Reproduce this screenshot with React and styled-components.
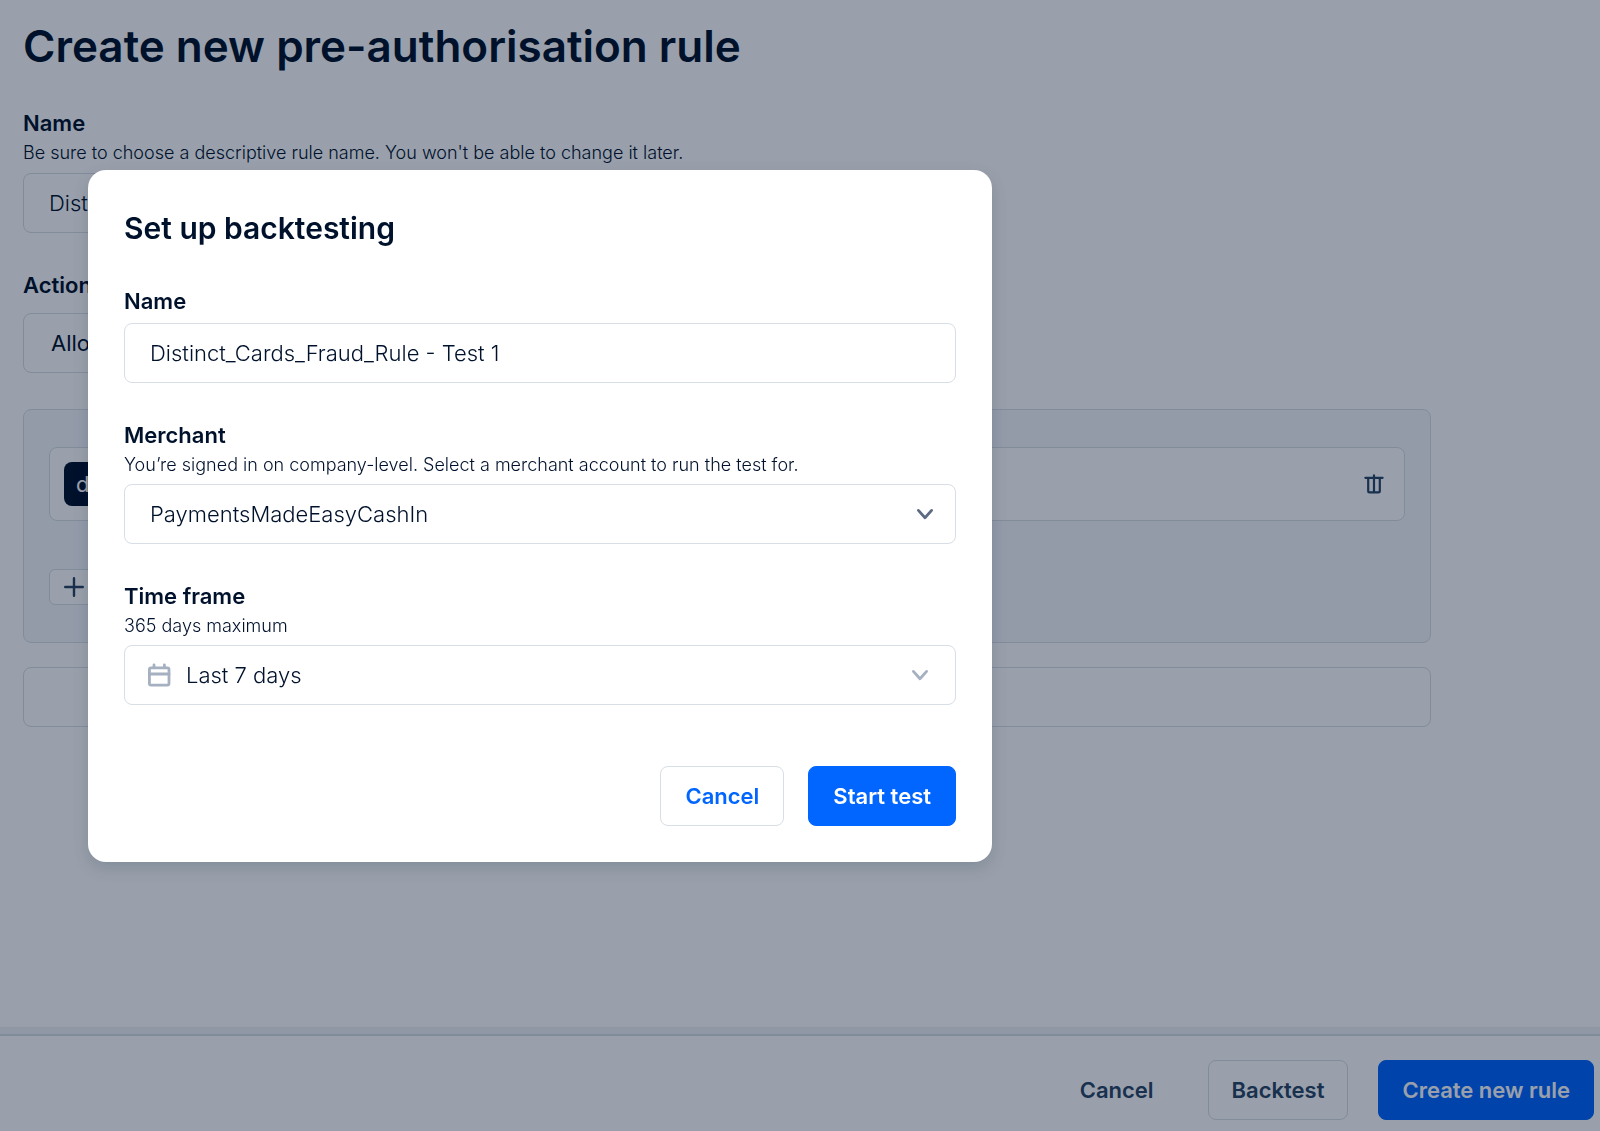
import React from "react";
import styled, { createGlobalStyle } from "styled-components";

const color = {
  ink: "#00112c",
  slate: "#2b4665",
  muted: "#5c6b82",
  faint: "#a5b0c0",
  line: "#d8dee5",
  panel: "#f5f7fb",
  blue: "#0066ff",
};

const GlobalStyle = createGlobalStyle`
  *, *::before, *::after { box-sizing: border-box; }
  body {
    margin: 0;
    background: #fff;
    color: ${color.ink};
    font-family: Inter, "Liberation Sans", sans-serif;
    font-size: 22px;
    line-height: 30px;
  }
  h1, h2, p { margin: 0; }
  button, input, select { font: inherit; color: inherit; }
`;

const Page = styled.div`
  display: flex;
  flex-direction: column;
  min-height: 100vh;
`;

const Main = styled.main`
  flex: 1;
  display: flex;
  flex-direction: column;
  padding: 18px 169px 0 23px;
`;

const PageTitle = styled.h1`
  font-size: 44px;
  line-height: 56px;
  font-weight: 600;
  margin-bottom: 34px;
`;

const Field = styled.div`
  display: flex;
  flex-direction: column;
  max-width: ${(p) => p.$max || "none"};
  margin-bottom: ${(p) => p.$after || 37}px;
`;

const Label = styled.label`
  align-self: flex-start;
  font-weight: 600;
`;

const Help = styled.p`
  font-size: 18px;
  font-weight: 300;
`;

const Control = styled.div`
  position: relative;
  margin-top: ${(p) => p.$gap || 4}px;
`;

const TextInput = styled.input`
  display: block;
  width: 100%;
  height: 60px;
  padding: 0 25px;
  border: 1px solid ${color.line};
  border-radius: 8px;
  background: #fff;
  font-weight: 300;
`;

const Select = styled.select`
  display: block;
  width: 100%;
  height: 60px;
  padding: 0 60px 0 ${(p) => p.$indent || 25}px;
  border: 1px solid ${color.line};
  border-radius: 8px;
  background: #fff;
  appearance: none;
  font-weight: ${(p) => p.$weight || 300};
`;

const Leading = styled.span`
  position: absolute;
  left: 23px;
  top: 18px;
  display: flex;
  color: ${color.faint};
  pointer-events: none;
`;

const Trailing = styled.span`
  position: absolute;
  right: ${(p) => (p.$inset ? 24 : 19)}px;
  top: 18px;
  display: flex;
  color: ${(p) => (p.$inset ? color.faint : color.muted)};
  pointer-events: none;
`;

const Panel = styled.section`
  display: flex;
  flex-direction: column;
  align-items: flex-start;
  gap: 48px;
  padding: 37px 25px;
  border: 1px solid ${color.line};
  border-radius: 8px;
  background: ${color.panel};
`;

const Condition = styled.div`
  display: flex;
  align-items: center;
  justify-content: space-between;
  align-self: stretch;
  height: 74px;
  padding: 0 18px 0 14px;
  border: 1px solid ${color.line};
  border-radius: 8px;
  background: #fff;
`;

const Chip = styled.span`
  padding: 7px 12px;
  border-radius: 8px;
  background: ${color.ink};
  color: #fff;
  font-size: 22px;
`;

const IconButton = styled.button`
  display: flex;
  padding: 0;
  border: 0;
  background: none;
  color: ${color.slate};
`;

const AddButton = styled.button`
  display: flex;
  align-items: center;
  height: 36px;
  width: 120px;
  padding: 0 12px;
  border: 1px solid ${color.line};
  border-radius: 6px;
  background: #fff;
  color: ${color.slate};
`;

const AddGroup = styled.button`
  height: 60px;
  margin-top: 24px;
  border: 1px solid ${color.line};
  border-radius: 8px;
  background: #fff;
`;

const Footer = styled.footer`
  display: flex;
  justify-content: flex-end;
  gap: 30px;
  padding: 24px 6px 11px;
  border-top: 2px solid ${color.line};
  box-shadow: 0 -7px 0 #f0f2f7;
`;

const variants = {
  primary: `border-color: ${color.blue}; background: ${color.blue}; color: #fff;`,
  outline: `border-color: ${color.line}; background: #fff; color: ${color.slate};`,
  accent: `border-color: ${color.line}; background: #fff; color: ${color.blue};`,
  ghost: `border-color: transparent; background: none; color: ${color.slate};`,
};

const Button = styled.button`
  height: 60px;
  padding: 0 ${(p) => (p.$roomy ? 24 : 23)}px;
  border: 1px solid;
  border-radius: 8px;
  font-weight: 600;
  ${(p) => variants[p.$variant]}
`;

const Scrim = styled.div`
  position: fixed;
  inset: 0;
  padding: 170px 88px;
  background: rgba(0, 17, 44, 0.4);
`;

const Dialog = styled.div`
  max-width: 904px;
  padding: 36px;
  border-radius: 18px;
  background: #fff;
  box-shadow: 0 6px 16px rgba(0, 40, 60, 0.16);
`;

const DialogTitle = styled.h2`
  font-size: 30px;
  line-height: 44px;
  font-weight: 600;
  margin-bottom: 36px;
`;

const Actions = styled.div`
  display: flex;
  justify-content: flex-end;
  gap: 24px;
`;

const Chevron = () => (
  <svg width="24" height="24" viewBox="0 0 24 24" fill="none" stroke="currentColor" strokeWidth="2.8" strokeLinecap="round" strokeLinejoin="round" aria-hidden="true">
    <path d="M5.4 8.4 12 15.8l6.6-7.4" />
  </svg>
);

const Calendar = () => (
  <svg width="24" height="24" viewBox="0 0 24 24" fill="none" stroke="currentColor" strokeWidth="2.8" strokeLinecap="round" aria-hidden="true">
    <rect x="2.4" y="4.8" width="19.6" height="17.4" rx="1.6" />
    <path d="M2.5 11h19.5M7 2v2M17.4 2v2" />
  </svg>
);

const Trash = () => (
  <svg width="24" height="24" viewBox="0 0 24 24" fill="none" stroke="currentColor" strokeWidth="2.2" strokeLinecap="round" strokeLinejoin="round" aria-hidden="true">
    <path d="M3.4 5.8h17.2M12 3.4v17M6.2 5.8v13.2q0 1.4 1.4 1.4h8.8q1.4 0 1.4-1.4V5.8" />
  </svg>
);

const Plus = () => (
  <svg width="24" height="24" viewBox="0 0 24 24" stroke="currentColor" strokeWidth="2.4" strokeLinecap="round" aria-hidden="true">
    <path d="M3.2 12h17.6M12 3.2v17.6" />
  </svg>
);

export default function App() {
  return (
    <>
      <GlobalStyle />
      <Page>
        <Main>
          <PageTitle>Create new pre-authorisation rule</PageTitle>
          <Field $max="720px">
            <Label htmlFor="rule-name">Name</Label>
            <Help>Be sure to choose a descriptive rule name. You won't be able to change it later.</Help>
            <Control $gap={5}>
              <TextInput id="rule-name" defaultValue="Distinct_Cards_Fraud_Rule" />
            </Control>
          </Field>
          <Field $max="720px" $after={36}>
            <Label htmlFor="rule-action">Action</Label>
            <Control $gap={13}>
              <Select id="rule-action" $indent={27} $weight={400}>
                <option>Allow</option>
              </Select>
            </Control>
          </Field>
          <Panel>
            <Condition>
              <Chip>distinct</Chip>
              <IconButton type="button" aria-label="Delete condition">
                <Trash />
              </IconButton>
            </Condition>
            <AddButton type="button" aria-label="Add condition">
              <Plus />
            </AddButton>
          </Panel>
          <AddGroup type="button" aria-label="Add condition group" />
        </Main>
        <Footer>
          <Button type="button" $variant="ghost">Cancel</Button>
          <Button type="button" $variant="outline">Backtest</Button>
          <Button type="button" $variant="primary">Create new rule</Button>
        </Footer>
      </Page>
      <Scrim>
        <Dialog role="dialog" aria-modal="true" aria-labelledby="dialog-title">
          <DialogTitle id="dialog-title">Set up backtesting</DialogTitle>
          <Field>
            <Label htmlFor="test-name">Name</Label>
            <Control $gap={7}>
              <TextInput id="test-name" defaultValue="Distinct_Cards_Fraud_Rule - Test 1" />
            </Control>
          </Field>
          <Field>
            <Label htmlFor="merchant">Merchant</Label>
            <Help>You’re signed in on company-level. Select a merchant account to run the test for.</Help>
            <Control>
              <Select id="merchant">
                <option>PaymentsMadeEasyCashIn</option>
              </Select>
              <Trailing>
                <Chevron />
              </Trailing>
            </Control>
          </Field>
          <Field $after={61}>
            <Label htmlFor="time-frame">Time frame</Label>
            <Help>365 days maximum</Help>
            <Control>
              <Select id="time-frame" $indent={61}>
                <option>Last 7 days</option>
              </Select>
              <Leading>
                <Calendar />
              </Leading>
              <Trailing $inset>
                <Chevron />
              </Trailing>
            </Control>
          </Field>
          <Actions>
            <Button type="button" $variant="accent" $roomy>Cancel</Button>
            <Button type="button" $variant="primary" $roomy>Start test</Button>
          </Actions>
        </Dialog>
      </Scrim>
    </>
  );
}
